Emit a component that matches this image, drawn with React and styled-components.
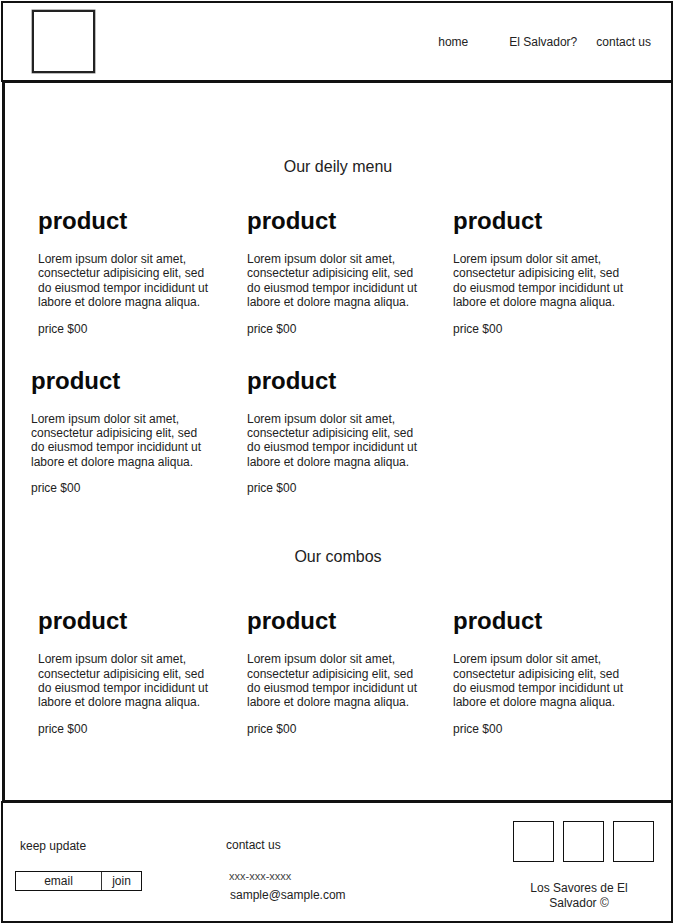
import styled, { createGlobalStyle } from "styled-components";

const GlobalStyle = createGlobalStyle`
  html, body {
    margin: 0;
    padding: 0;
    background: #fff;
  }
  body {
    font-family: "Liberation Sans", Arial, sans-serif;
    color: #222;
  }
`;

const lorem = [
  "Lorem ipsum dolor sit amet,",
  "consectetur adipisicing elit, sed",
  "do eiusmod tempor incididunt ut",
  "labore et dolore magna aliqua.",
];

const dailyMenu = [
  { id: 1 },
  { id: 2 },
  { id: 3 },
  { id: 4, shift: -7 },
  { id: 5 },
];

const combos = [{ id: 1 }, { id: 2 }, { id: 3 }];

const App = () => {
  return (
    <Page>
      <GlobalStyle />
      <Header>
        <Logo />
        <Nav>
          <NavLink $extra={22}>home</NavLink>
          <NavLink>El Salvador?</NavLink>
          <NavLink>contact us</NavLink>
        </Nav>
      </Header>

      <Main>
        <SectionTitle>Our deily menu</SectionTitle>
        <ProductGrid $top={31}>
          {dailyMenu.map((item) => (
            <Product key={item.id} shift={item.shift} />
          ))}
        </ProductGrid>

        <SectionTitle $top={53}>Our combos</SectionTitle>
        <ProductGrid $top={41}>
          {combos.map((item) => (
            <Product key={item.id} />
          ))}
        </ProductGrid>
      </Main>

      <Footer>
        <FooterCol $width={211} $top={36}>
          <FooterLabel $indent={5}>keep update</FooterLabel>
          <JoinForm>
            <EmailField>email</EmailField>
            <JoinButton>join</JoinButton>
          </JoinForm>
        </FooterCol>
        <FooterCol $grow $top={35}>
          <FooterLabel>contact us</FooterLabel>
          <Phone>xxx-xxx-xxxx</Phone>
          <Mail>sample@sample.com</Mail>
        </FooterCol>
        <SocialCol>
          <SocialRow>
            <SocialBox />
            <SocialBox />
            <SocialBox />
          </SocialRow>
          <Copyright>Los Savores de El Salvador ©</Copyright>
        </SocialCol>
      </Footer>
    </Page>
  );
};

const Product = ({ shift }) => {
  return (
    <ProductCard style={shift ? { marginLeft: shift } : undefined}>
      <ProductName>product</ProductName>
      <ProductText>
        {lorem.map((line, index) => (
          <span key={index}>{line}</span>
        ))}
      </ProductText>
      <Price>price $00</Price>
    </ProductCard>
  );
};

const Page = styled.div`
  width: 672px;
  height: 922px;
  margin: 1px 0 0 1px;
  display: flex;
  flex-direction: column;
`;

const Header = styled.header`
  box-sizing: border-box;
  height: 81px;
  border: 2px solid #111;
  display: flex;
  align-items: center;
  justify-content: space-between;
  padding: 0 20px 0 29px;
`;

const Logo = styled.div`
  box-sizing: border-box;
  width: 63px;
  height: 63px;
  border: 2px solid #222;
  box-shadow: 0 0 0 0.5px #777;
`;

const Nav = styled.nav`
  display: flex;
  align-items: center;
  gap: 19px;
`;

const NavLink = styled.span`
  font-size: 12px;
  color: #222;
  margin-right: ${(props) => (props.$extra ? props.$extra + "px" : 0)};
`;

const Main = styled.main`
  box-sizing: border-box;
  height: 721px;
  margin: -1px 0 0 1px;
  border: 2px solid #111;
  border-left-width: 3px;
  display: flex;
  flex-direction: column;
  padding-top: 75px;
`;

const SectionTitle = styled.h2`
  margin: ${(props) => (props.$top ? props.$top + "px" : 0)} 0 0;
  font-size: 16px;
  font-weight: 400;
  line-height: 18px;
  color: #222;
  text-align: center;
`;

const ProductGrid = styled.div`
  display: grid;
  grid-template-columns: 209px 206px 1fr;
  row-gap: 31px;
  margin-top: ${(props) => props.$top}px;
  padding-left: 33px;
`;

const ProductCard = styled.article`
  display: flex;
  flex-direction: column;
`;

const ProductName = styled.h3`
  margin: 0;
  font-size: 24px;
  font-weight: 700;
  line-height: 28px;
  color: #0a0a0a;
`;

const ProductText = styled.p`
  margin: 17px 0 0;
  display: flex;
  flex-direction: column;
  font-size: 12px;
  line-height: 14.4px;
  color: #222;
`;

const Price = styled.span`
  margin-top: 12px;
  font-size: 12px;
  line-height: 14px;
  color: #222;
`;

const Footer = styled.footer`
  box-sizing: border-box;
  height: 122px;
  margin-top: -1px;
  border: 2px solid #111;
  display: flex;
  align-items: flex-start;
  padding: 0 16px 0 12px;
`;

const FooterCol = styled.div`
  display: flex;
  flex-direction: column;
  align-items: flex-start;
  width: ${(props) => (props.$width ? props.$width + "px" : "auto")};
  flex: ${(props) => (props.$grow ? 1 : "none")};
  padding-top: ${(props) => props.$top}px;
`;

const FooterLabel = styled.span`
  font-size: 12px;
  line-height: 14px;
  color: #222;
  margin-left: ${(props) => (props.$indent ? props.$indent + "px" : 0)};
`;

const JoinForm = styled.div`
  display: flex;
  margin-top: 18px;
  border: 1px solid #111;
  height: 20px;
  box-sizing: border-box;
`;

const EmailField = styled.span`
  width: 85px;
  font-size: 12px;
  line-height: 18px;
  text-align: center;
  color: #222;
  border-right: 1px solid #333;
`;

const JoinButton = styled.span`
  width: 39px;
  font-size: 12px;
  line-height: 18px;
  text-align: center;
  color: #222;
`;

const Phone = styled.span`
  margin: 17px 0 0 3px;
  font-size: 11px;
  line-height: 14px;
  color: #444;
`;

const Mail = styled.span`
  margin: 5px 0 0 4px;
  font-size: 12px;
  line-height: 14px;
  color: #222;
`;

const SocialCol = styled.div`
  width: 142px;
  padding-top: 18px;
  display: flex;
  flex-direction: column;
`;

const SocialRow = styled.div`
  display: flex;
  gap: 9px;
`;

const SocialBox = styled.div`
  box-sizing: border-box;
  width: 41px;
  height: 41px;
  border: 1px solid #111;
`;

const Copyright = styled.span`
  margin-top: 19px;
  padding-right: 10px;
  font-size: 12px;
  line-height: 15px;
  text-align: center;
  color: #222;
`;

export default App;
